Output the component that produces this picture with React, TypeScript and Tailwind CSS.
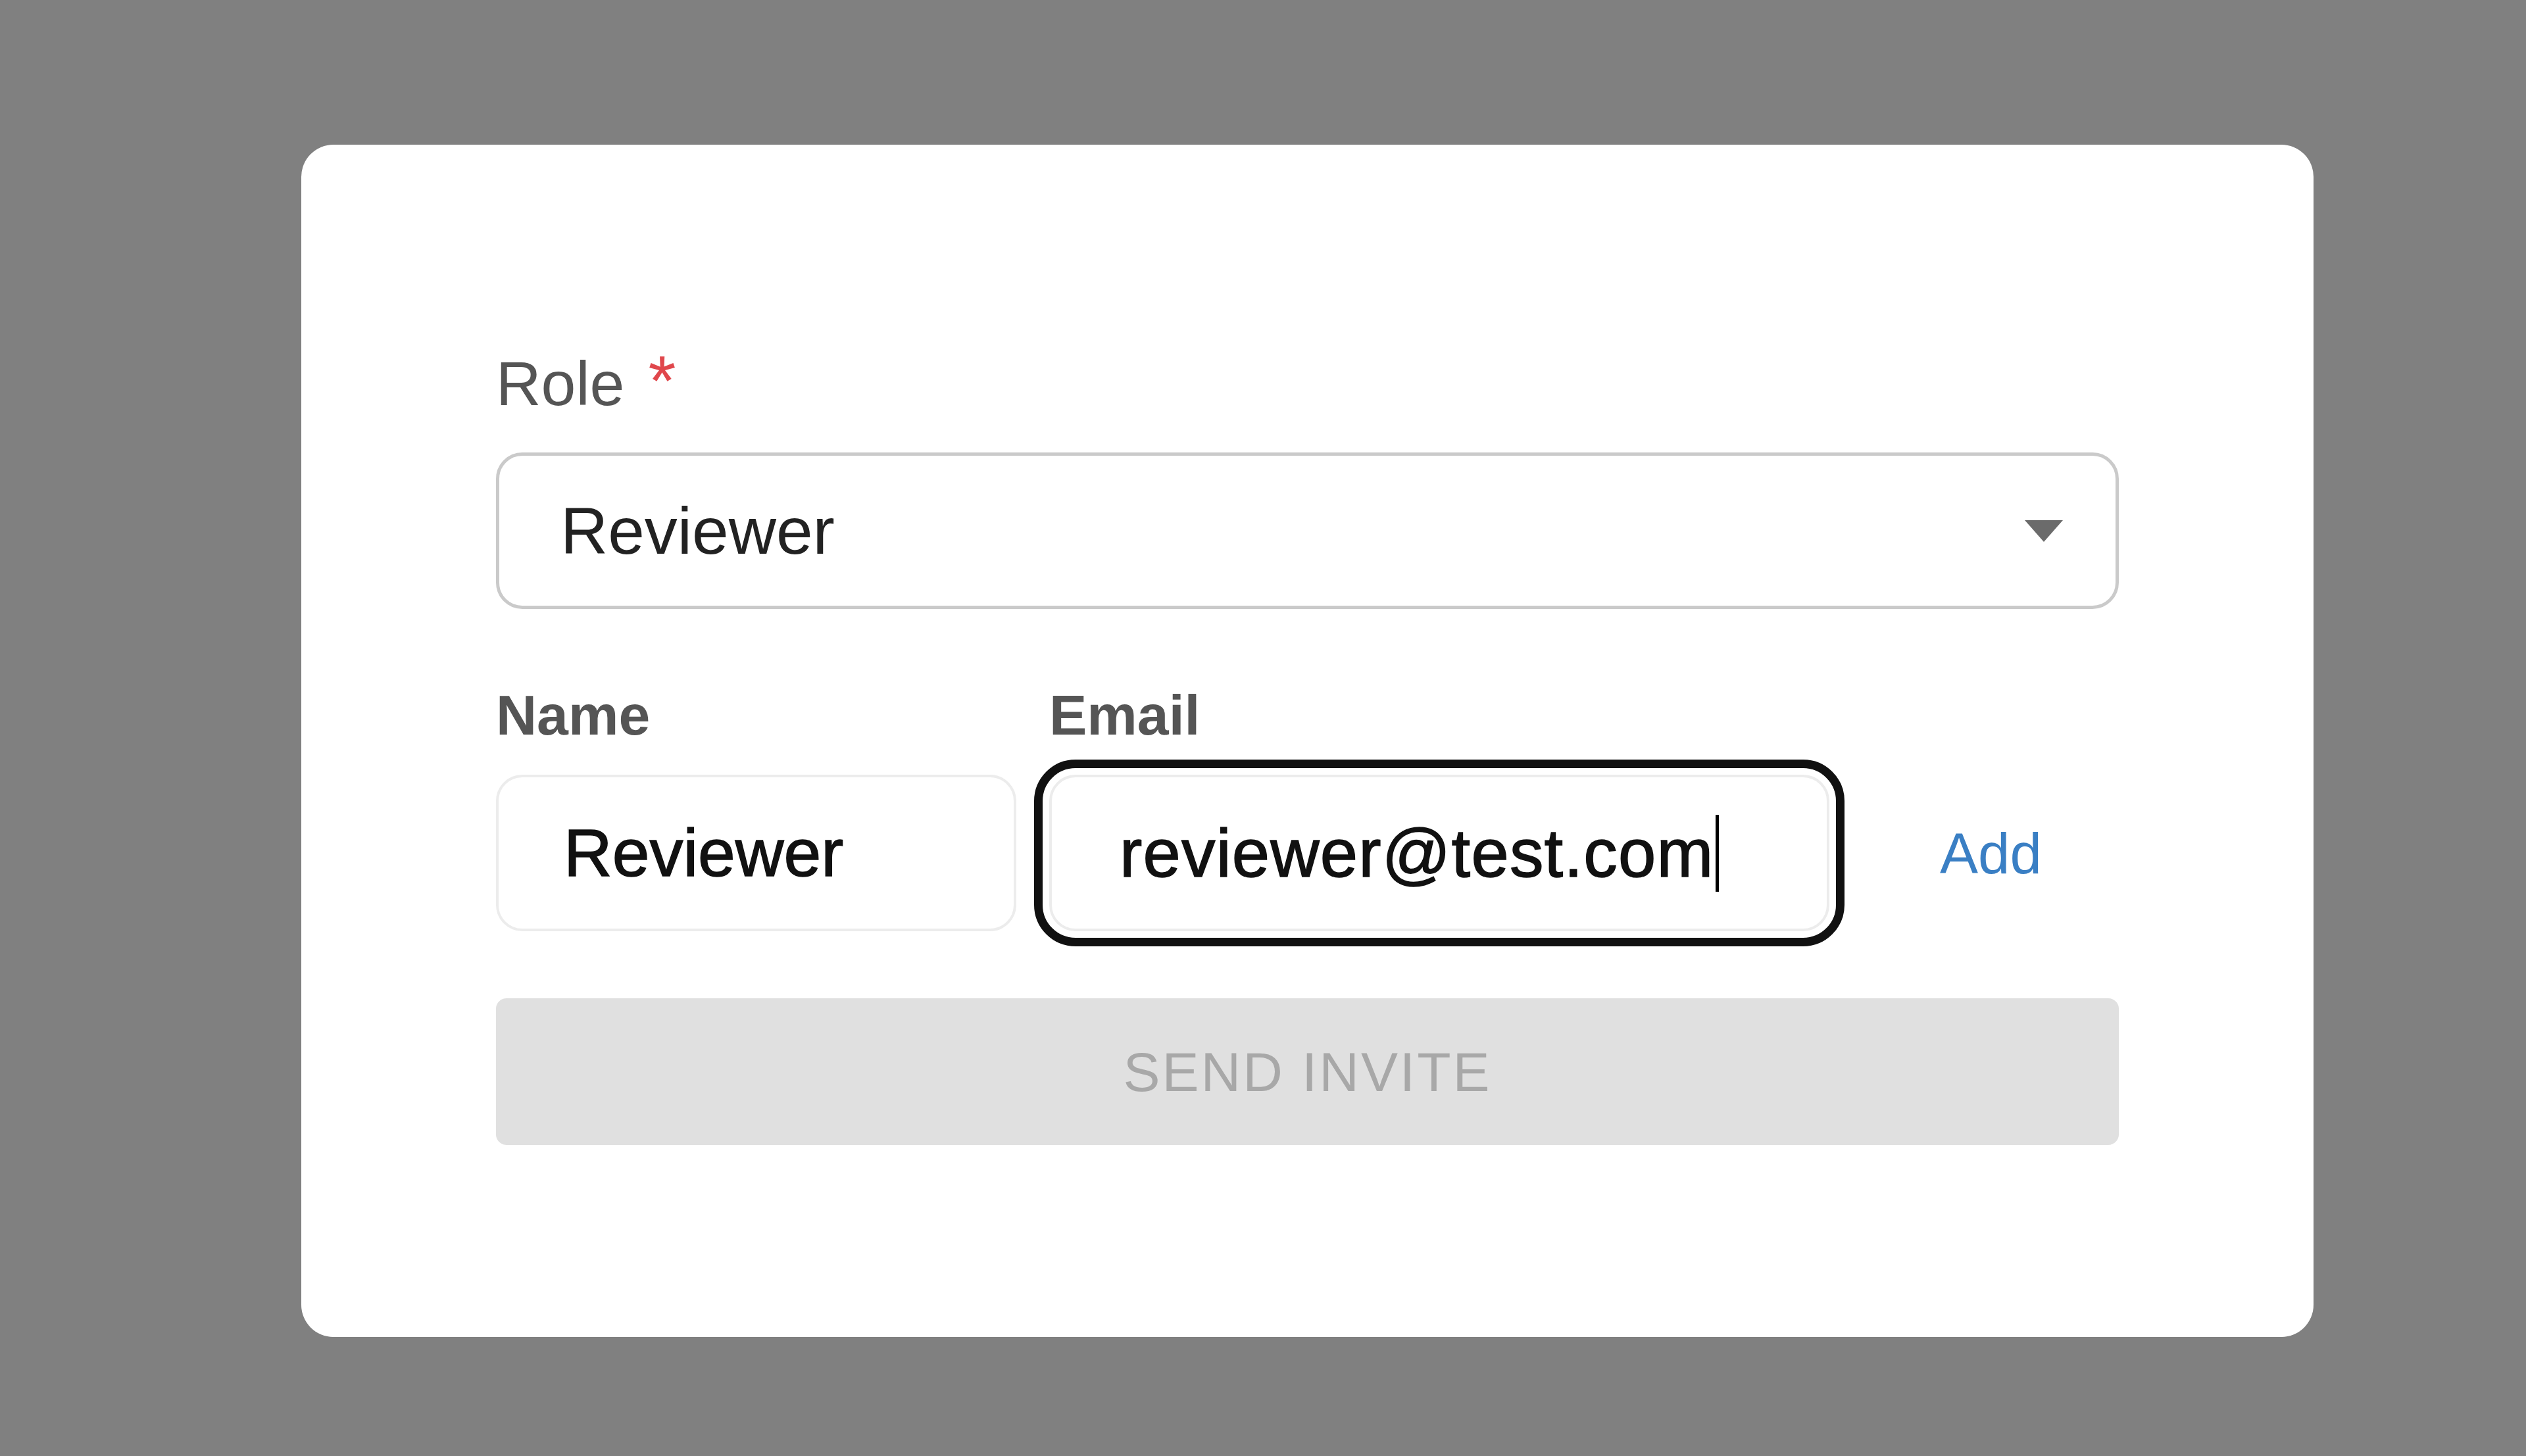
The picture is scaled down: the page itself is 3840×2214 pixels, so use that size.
const InviteCard = () => {
    return (
        <div className="w-[3059px] h-[1813px] rounded-[49px] bg-white px-[296px] pt-[306px]">
            <div className="flex h-[106px] items-baseline overflow-visible text-[95px] leading-[106px] text-[#555555]">
                <span>Role</span>
                <span className="ml-[36px] text-[108px] leading-[106px] text-[#e0474c]">*</span>
            </div>

            <div className="mt-[56px] flex h-[238px] items-center justify-between rounded-[40px] border-[5px] border-[#cacaca] pl-[93px] pr-[80px]">
                <span className="text-[100px] leading-none text-[#222222]">Reviewer</span>
                <svg width="58" height="33" viewBox="0 0 58 33" aria-hidden="true">
                    <path d="M0 0 H58 L29 33 Z" fill="#6b6b6b" />
                </svg>
            </div>

            <div className="mt-[113px] flex text-[86px] leading-[96px] font-bold text-[#555555]">
                <div className="w-[791px]">Name</div>
                <div className="ml-[50px]">Email</div>
            </div>

            <div className="mt-[43px] flex items-center">
                <div className="flex h-[238px] w-[791px] items-center rounded-[40px] border-[4px] border-[#ececec] pl-[99px]">
                    <span className="text-[102px] leading-none text-[#111111] [-webkit-text-stroke:1.5px_#111111]">Reviewer</span>
                </div>
                <div className="ml-[50px] flex h-[238px] w-[1186px] items-center rounded-[40px] border-[4px] border-[#ececec] pl-[103px] outline-[13px] outline-offset-[10px] outline-solid outline-[#111111]">
                    <span className="text-[103px] leading-none tracking-[1.2px] text-[#111111] [-webkit-text-stroke:1.5px_#111111]">reviewer@test.com</span>
                    <span className="ml-[3px] h-[117px] w-[5px] bg-black" />
                </div>
                <button type="button" className="ml-[168px] text-[87px] leading-none text-[#3a7fc4]">
                    Add
                </button>
            </div>

            <button
                type="button"
                className="mt-[102px] flex h-[223px] w-full items-center justify-center rounded-[16px] bg-[#e0e0e0] text-[84px] leading-none tracking-[0.035em] text-[#a8a8a8]"
            >
                SEND INVITE
            </button>
        </div>
    );
};

export default function App() {
    return (
        <div className="min-h-screen w-full bg-[#808080] pl-[458px] pt-[220px] font-['Liberation_Sans',Arial,sans-serif]">
            <InviteCard />
        </div>
    );
}
